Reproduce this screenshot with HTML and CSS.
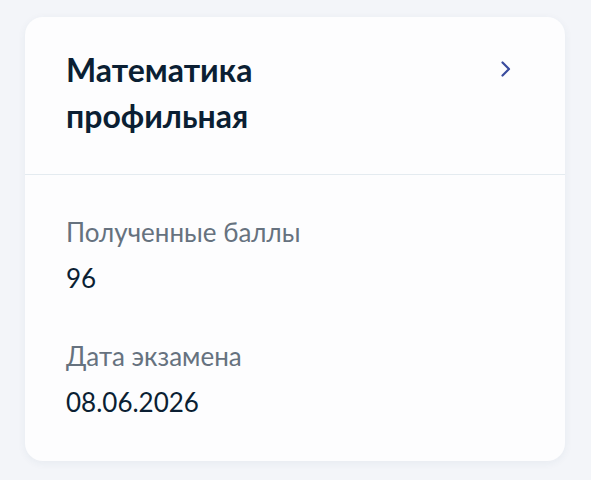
FILE: index.html
```html
<!DOCTYPE html>
<html lang="ru">

<head>
    <meta charset="UTF-8">
    <meta name="viewport" content="width=device-width, initial-scale=1.0">
    <title>Результаты экзамена</title>
    <link rel="stylesheet" href="styles.css">
</head>

<body>
    <div class="card">
        <div class="card-head">
            <h2 class="subject">Математика<br>профильная</h2>
            <svg class="chevron" width="12" height="18" viewBox="0 0 12 18" fill="none">
                <path d="M3.5 2.5l6.5 6.5-6.5 6.5" stroke="#3a4c9e" stroke-width="2.2" stroke-linecap="round" stroke-linejoin="round" />
            </svg>
        </div>

        <div class="card-body">
            <div class="field">
                <div class="label">Полученные баллы</div>
                <div class="value">96</div>
            </div>
            <div class="field">
                <div class="label">Дата экзамена</div>
                <div class="value">08.06.2026</div>
            </div>
        </div>
    </div>
</body>

</html>
```

FILE: styles.css
```css
body {
    margin: 0;
    padding: 17px 26px 18px 25px;
    font-family: Lato, "Noto Sans", sans-serif;
    background-color: #f3f5f9;
    color: #0b1f33;
}

.card {
    background: #fdfdfe;
    border-radius: 18px;
    box-shadow: 0 2px 8px rgba(40, 60, 110, 0.06);
}

.card-head {
    display: flex;
    justify-content: space-between;
    align-items: flex-start;
    padding: 30px 54px 35px 41px;
    border-bottom: 1px solid #e4ebf0;
}

.subject {
    margin: 0;
    font-size: 32px;
    font-weight: 700;
    line-height: 46px;
}

.chevron {
    margin-top: 13px;
}

.card-body {
    display: flex;
    flex-direction: column;
    gap: 44px;
    padding: 40px 41px 42px;
}

.field {
    display: flex;
    flex-direction: column;
    gap: 12px;
}

.label {
    font-size: 26px;
    line-height: 34px;
    color: #66727f;
}

.value {
    font-size: 26px;
    line-height: 34px;
}
```
